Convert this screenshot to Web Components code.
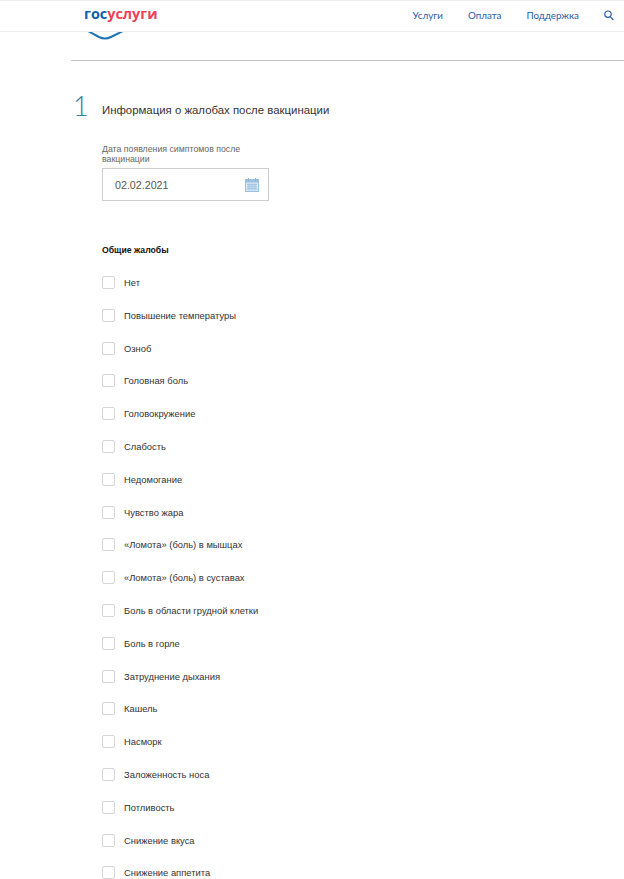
<!DOCTYPE html>
<html lang="ru"><head><meta charset="utf-8"><title>Жалобы</title>
<style>
html,body{margin:0;padding:0;background:#fff;height:879px;overflow:hidden;font-family:"Liberation Sans",Arial,sans-serif}
</style></head><body>
<gu-header></gu-header>
<gu-form></gu-form>
<script>
class GuHeader extends HTMLElement{constructor(){super();this.attachShadow({mode:'open'}).innerHTML=`<style>
:host{display:flex;height:32px;box-sizing:border-box;border-top:1px solid #eee;border-bottom:1px solid #ededed;align-items:center;background:#fff;position:relative;z-index:1;font-family:Lato,"Liberation Sans",sans-serif}
.logo{margin-left:84px;font:700 14.4px/1 "Open Sans","Liberation Sans",sans-serif;color:#ee3f58;margin-top:-3px}
.logo b{color:#0b62a8;font-weight:700}
nav{margin-left:auto;display:flex;align-items:center;gap:25px;font-size:9.8px;color:#2a5da8;margin-right:10px;margin-top:-2px}
svg{display:block}
</style><div class="logo"><b>гос</b>услуги</div><nav><span>Услуги</span><span>Оплата</span><span>Поддержка</span><svg width="10" height="11" viewBox="0 0 10 11" fill="none" stroke="#2a5da8" stroke-width="1.2"><circle cx="4" cy="4.2" r="3.2"/><path d="M6.4 6.8 9.4 10"/></svg></nav>`}}
class GuCheck extends HTMLElement{constructor(){super();this.attachShadow({mode:'open'}).innerHTML=`<style>
:host{display:flex;align-items:center;height:13px;font-size:9.4px;color:#333}
i{width:13px;height:13px;box-sizing:border-box;border:1px solid #d5d5d5;border-radius:2px;background:#fff;margin-right:9px;flex:none}
</style><i></i><slot></slot>`}}
class GuForm extends HTMLElement{constructor(){super();const items=["Нет","Повышение температуры","Озноб","Головная боль","Головокружение","Слабость","Недомогание","Чувство жара","«Ломота» (боль) в мышцах","«Ломота» (боль) в суставах","Боль в области грудной клетки","Боль в горле","Затруднение дыхания","Кашель","Насморк","Заложенность носа","Потливость","Снижение вкуса","Снижение аппетита"];
this.attachShadow({mode:'open'}).innerHTML=`<style>
:host{display:block;margin-left:71px;position:relative;font-family:"Liberation Sans",Arial,sans-serif}
.top{height:28px;border-bottom:1px solid #c4c4c4;overflow:hidden}
.top svg{display:block;margin:0 0 0 15px}
.sec{display:flex;margin-top:33px;height:31px}
.n{width:31px;font:300 27px/24px Lato,"Liberation Sans",sans-serif;color:#2e7f9f;padding-left:2px;box-sizing:border-box}
h2{margin:8px 0 0;font:400 11.4px/16px "Liberation Sans",sans-serif;color:#333}
.body{margin-left:31px}
label{display:block;margin-top:20px;font-size:8.75px;line-height:9.5px;color:#666;width:160px}
.inp{width:167px;height:33px;box-sizing:border-box;border:1px solid #ccc;margin-top:4px;display:flex;align-items:center;justify-content:space-between;padding:0 9px 0 12px;font-size:10.7px;color:#555}
h3{margin:43px 0 0;font:700 8.7px/12px "Liberation Sans",sans-serif;color:#111}
.list{display:flex;flex-direction:column;gap:19.8px;margin-top:20px}
</style><div class="top"><svg width="44" height="11" viewBox="0 0 44 11" fill="none" stroke="#1d74b5" stroke-width="2"><path d="M2 -1 13 5Q19 8 25 5L37 -1"/></svg></div>
<div class="sec"><div class="n">1</div><h2>Информация о жалобах после вакцинации</h2></div>
<div class="body"><label>Дата появления симптомов после вакцинации</label>
<div class="inp"><span>02.02.2021</span><svg width="14" height="14" viewBox="0 0 14 14"><rect x=".5" y="1.5" width="13" height="12" fill="#d4e4f3" stroke="#9cc0e0"/><rect x="1" y="2" width="12" height="2.5" fill="#9cc0e0"/><path d="M3.5 0v3M10.5 0v3" stroke="#8fb4d6"/><path d="M2 6.5h10M2 8.500h10M2 10.500h10M4 5.500v7M7 5.500v7M10 5.500v7" stroke="#9cc0e0" stroke-width=".8"/></svg></div>
<h3>Общие жалобы</h3>
<div class="list">${items.map(t=>`<gu-check>${t}</gu-check>`).join('')}</div></div>`}}
customElements.define('gu-check',GuCheck);customElements.define('gu-header',GuHeader);customElements.define('gu-form',GuForm);
</script></body></html>
